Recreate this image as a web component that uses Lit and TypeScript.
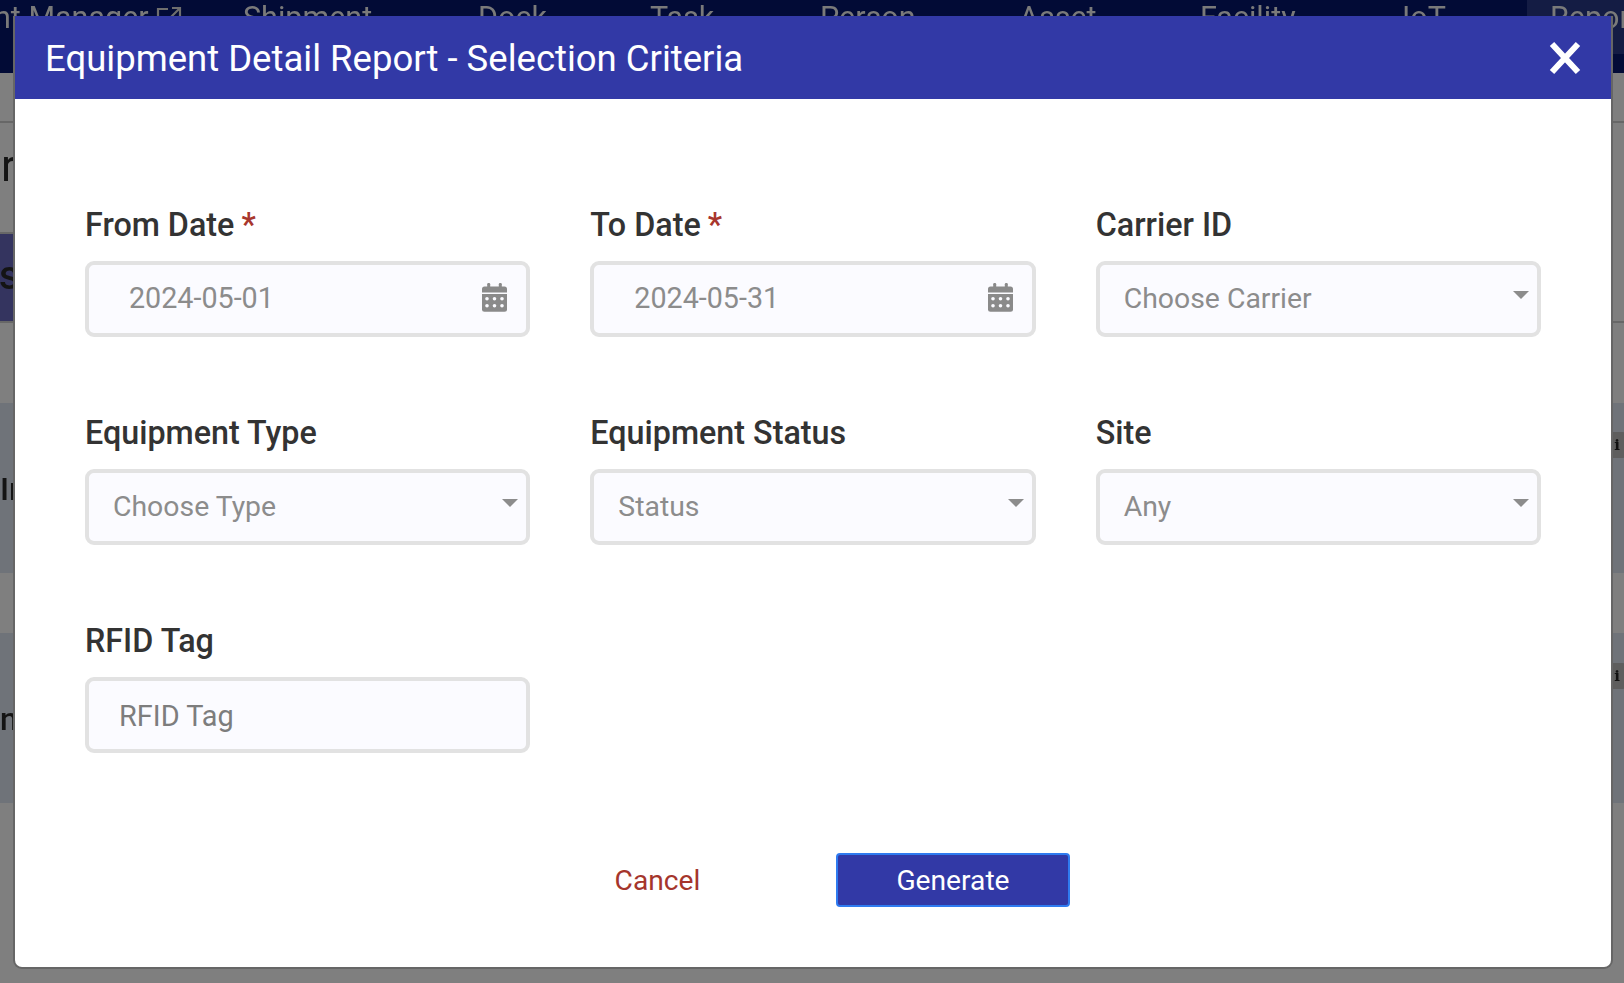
import { LitElement, html, css, svg } from "lit";
import { customElement } from "lit/decorators.js";

const calendar = html`<svg class="cal" viewBox="0 0 25 29" width="25" height="29" aria-hidden="true">
  <rect x="5.2" y="0" width="3" height="6" rx="1.2" fill="#8a8a8a"/>
  <rect x="16.8" y="0" width="3" height="6" rx="1.2" fill="#8a8a8a"/>
  <path d="M2.5 3.4H22.5A2.5 2.5 0 0 1 25 5.9V9.6H0V5.9A2.5 2.5 0 0 1 2.5 3.4Z" fill="#8a8a8a"/>
  <path d="M0 11H25V26.2A2.5 2.5 0 0 1 22.5 28.7H2.500A2.5 2.5 0 0 1 0 26.200Z" fill="#8a8a8a"/>
  ${[5, 12.5, 20].map((x) => [15.7, 22.7].map((y) => svg`<circle cx=${x} cy=${y} r="1.8" fill="#fbfbff"/>`))}
</svg>`;

const caret = html`<svg class="caret" viewBox="0 0 16 8" width="16" height="8" aria-hidden="true"><path d="M0 0H16L8 8Z" fill="#8c8c8c"/></svg>`;

const closeIcon = html`<svg viewBox="0 0 32 34" width="32" height="34" aria-hidden="true"><path d="M3 3L29 31M29 3L3 31" stroke="#fff" stroke-width="6" fill="none"/></svg>`;

const navItems = ["Shipment", "Dock", "Task", "Person", "Asset", "Facility", "IoT"];

@customElement("app-root")
export class AppRoot extends LitElement {
  static styles = css`
    :host {
      display: block;
      position: relative;
      width: 1624px;
      height: 983px;
      overflow: hidden;
      background: #7f7f7f;
      font-family: Roboto, "Liberation Sans", sans-serif;
    }
    .page {
      display: flex;
      flex-direction: column;
      height: 983px;
      filter: blur(0.6px);
    }
    .nav {
      display: grid;
      grid-template-columns: 243px 235px 172px 170px 199px 181px 202px 125px 1fr;
      height: 73px;
      background: #020b36;
      color: #7a7a7a;
      font-size: 30.5px;
      line-height: 36px;
      white-space: nowrap;
    }
    .nav-first {
      margin-left: -6px;
      display: flex;
      gap: 7px;
    }
    .ext {
      margin-top: 6px;
    }
    .nav-tab {
      height: 54px;
      padding-left: 23px;
      background: #141c44;
    }
    .sub {
      height: 48px;
      border-bottom: 2px solid #676767;
      flex: none;
    }
    .section {
      height: 198px;
      border-bottom: 2px solid #676767;
      flex: none;
      display: flex;
      flex-direction: column;
      color: #141414;
    }
    .heading {
      height: 109px;
      font-size: 44px;
      line-height: 86px;
      padding-left: 1px;
    }
    .tab {
      width: 15px;
      height: 87px;
      border-top: 2px solid #676767;
      background: #34345f;
      font-size: 40px;
      font-weight: 500;
      line-height: 84px;
      text-indent: -1px;
    }
    .rows {
      display: flex;
      flex-direction: column;
      gap: 60px;
      margin-top: 80px;
    }
    .row {
      height: 170px;
      background: #6f7379;
      color: #141414;
      font-size: 32px;
      font-weight: 500;
      line-height: 172px;
      white-space: nowrap;
      display: flex;
      justify-content: space-between;
      align-items: flex-start;
    }
    .badge {
      width: 26px;
      height: 26px;
      margin-top: 29px;
      margin-right: -6px;
      border-radius: 8px;
      background: #5e5e5e;
      color: #111;
      font-family: "DejaVu Serif", serif;
      font-size: 15px;
      font-weight: 700;
      line-height: 26px;
      text-align: center;
    }
    .row.second .badge {
      margin-top: 30px;
    }
    .modal {
      position: absolute;
      left: 15px;
      top: 16px;
      width: 1596px;
      height: 951px;
      background: #fff;
      border-radius: 0 0 7px 7px;
      box-shadow: 0 0 0 2px #666;
      clip-path: inset(0 -3px -3px -3px);
      display: flex;
      flex-direction: column;
    }
    .modal-head {
      height: 83px;
      flex: none;
      box-sizing: border-box;
      padding: 0 30px 0 30px;
      background: #3239a6;
      color: #fff;
      display: flex;
      align-items: center;
      justify-content: space-between;
    }
    .title {
      font-size: 36.5px;
      font-weight: 400;
      padding-top: 2px;
    }
    .close {
      display: flex;
    }
    .form {
      display: grid;
      grid-template-columns: repeat(3, 1fr);
      column-gap: 60px;
      row-gap: 75px;
      padding: 105px 70px 0;
    }
    .field {
      display: flex;
      flex-direction: column;
    }
    .label {
      height: 40px;
      margin-bottom: 17px;
      font-size: 32.3px;
      font-weight: 500;
      line-height: 42px;
      color: #333;
      white-space: nowrap;
    }
    .star {
      color: #a8362d;
      margin-left: -1px;
    }
    .box {
      height: 76px;
      box-sizing: border-box;
      border: 4px solid #e2e2e2;
      border-radius: 9px;
      background: #fbfbff;
      color: #8c8c8c;
      font-size: 28.4px;
      display: flex;
      align-items: center;
      justify-content: space-between;
      padding: 0 8px 2px 24px;
    }
    .box.date {
      padding: 0 19px 2px 40px;
      font-size: 28.7px;
    }
    .cal {
      margin-bottom: 1px;
    }
    .box.text {
      padding: 2px 8px 0 30px;
      font-size: 28.9px;
      color: #7d7d7d;
    }
    .caret {
      align-self: flex-start;
      margin-top: 26px;
    }
    .actions {
      display: grid;
      grid-template-columns: 233px 234px;
      column-gap: 62px;
      padding: 100px 0 0 526px;
    }
    .btn {
      height: 54px;
      box-sizing: border-box;
      font-size: 28.2px;
      display: flex;
      align-items: center;
      justify-content: center;
      border-radius: 4px;
    }
    .cancel {
      color: #a5352c;
    }
    .generate {
      background: #3239a6;
      border: 2px solid #2f7bf0;
      color: #fff;
    }
  `;

  render() {
    return html`
      <div class="page">
        <div class="nav">
          <div class="nav-first">
            <span>nt Manager</span>
            <svg class="ext" viewBox="0 0 26 26" width="26" height="26" aria-hidden="true"><path d="M12 3H2V24H23V14M16 2H24V10M24 2L12 14" fill="none" stroke="#6e6e6e" stroke-width="2.2"/></svg>
          </div>
          ${navItems.map((n) => html`<div>${n}</div>`)}
          <div class="nav-tab">Report</div>
        </div>
        <div class="sub"></div>
        <div class="section">
          <div class="heading">r</div>
          <div class="tab">s</div>
        </div>
        <div class="rows">
          <div class="row"><span>Ir</span><span class="badge">i</span></div>
          <div class="row second"><span>ne</span><span class="badge">i</span></div>
        </div>
      </div>
      <div class="modal">
        <div class="modal-head">
          <div class="title">Equipment Detail Report - Selection Criteria</div>
          <div class="close">${closeIcon}</div>
        </div>
        <div class="form">
          <div class="field">
            <div class="label">From Date <span class="star">*</span></div>
            <div class="box date"><span>2024-05-01</span>${calendar}</div>
          </div>
          <div class="field">
            <div class="label">To Date <span class="star">*</span></div>
            <div class="box date"><span>2024-05-31</span>${calendar}</div>
          </div>
          <div class="field">
            <div class="label">Carrier ID</div>
            <div class="box"><span>Choose Carrier</span>${caret}</div>
          </div>
          <div class="field">
            <div class="label">Equipment Type</div>
            <div class="box"><span>Choose Type</span>${caret}</div>
          </div>
          <div class="field">
            <div class="label">Equipment Status</div>
            <div class="box"><span>Status</span>${caret}</div>
          </div>
          <div class="field">
            <div class="label">Site</div>
            <div class="box"><span>Any</span>${caret}</div>
          </div>
          <div class="field">
            <div class="label">RFID Tag</div>
            <div class="box text"><span>RFID Tag</span></div>
          </div>
        </div>
        <div class="actions">
          <div class="btn cancel">Cancel</div>
          <div class="btn generate">Generate</div>
        </div>
      </div>
    `;
  }
}
